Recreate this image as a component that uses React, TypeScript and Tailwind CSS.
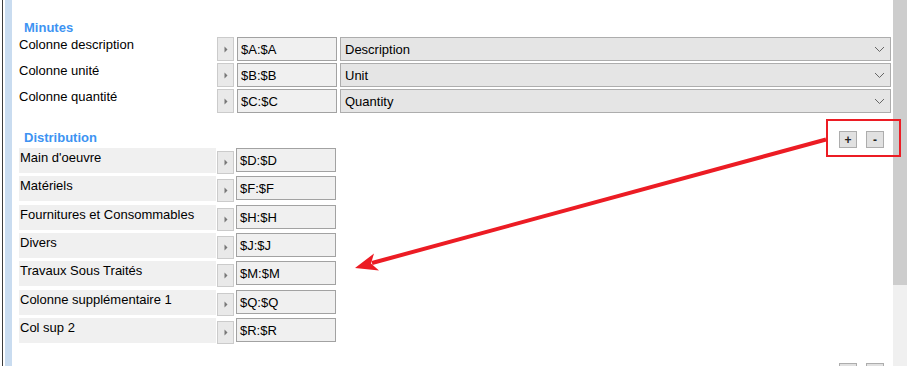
const minutes = [
  { label: "Colonne description", ref: "$A:$A", value: "Description" },
  { label: "Colonne unité", ref: "$B:$B", value: "Unit" },
  { label: "Colonne quantité", ref: "$C:$C", value: "Quantity" },
];

const distribution = [
  { label: "Main d'oeuvre", ref: "$D:$D" },
  { label: "Matériels", ref: "$F:$F" },
  { label: "Fournitures et Consommables", ref: "$H:$H" },
  { label: "Divers", ref: "$J:$J" },
  { label: "Travaux Sous Traités", ref: "$M:$M" },
  { label: "Colonne supplémentaire 1", ref: "$Q:$Q" },
  { label: "Col sup 2", ref: "$R:$R" },
];

function ArrowButton({ className = "" }: { className?: string }) {
  return (
    <div
      className={`flex h-[23px] w-[17px] shrink-0 items-center justify-center border border-[#cbcbcb] bg-[#e9e9e9] pl-[1px] ${className}`}
    >
      <svg width="4" height="7" viewBox="0 0 4 7" aria-hidden="true">
        <path d="M0.5 0.5 L3.5 3.5 L0.5 6.5Z" fill="#777" />
      </svg>
    </div>
  );
}

function RefBox({ value }: { value: string }) {
  return (
    <div className="h-[24px] w-[100px] shrink-0 border border-[#a2a2a2] bg-[#f0f0f0] pl-[3px] pt-[1px] text-[13px] leading-[22px] text-black">
      {value}
    </div>
  );
}

function SmallButton({ children }: { children?: string }) {
  return (
    <div className="flex h-[17px] w-[18px] items-center justify-center border border-[#adadad] bg-[#e1e1e1] text-[12px] font-bold leading-none text-[#222]">
      {children}
    </div>
  );
}

export default function App() {
  return (
    <div className="relative flex h-[366px] w-[907px] overflow-hidden bg-white font-['Liberation_Sans',Arial,sans-serif]">
      {/* left edge of the parent window */}
      <div className="flex w-[12px] shrink-0">
        <div className="w-[2px] bg-white" />
        <div className="w-[1px] bg-[#3c3c3c]" />
        <div className="w-[2px] bg-white" />
        <div className="w-[7px] bg-[#c9dcf0]" />
      </div>

      <div className="flex flex-1 flex-col pl-[7px] pt-[20px]">
        <div className="ml-[5px] text-[13px] font-bold leading-[15px] text-[#3d93f2]">Minutes</div>

        <div className="mt-[2px] flex flex-col gap-[2px]">
          {minutes.map((row) => (
            <div key={row.label} className="flex h-[24px] items-start">
              <div className="w-[198px] shrink-0 text-[13px] leading-[15px] text-black">{row.label}</div>
              <ArrowButton className="h-[24px]" />
              <div className="ml-[3px]">
                <RefBox value={row.ref} />
              </div>
              <div className="ml-[3px] mr-[2px] flex h-[24px] flex-1 items-center justify-between border border-[#adadad] bg-[#e5e5e5] pl-[4px] pr-[5px] pt-[1px] text-[13px] text-black">
                <span>{row.value}</span>
                <svg width="11" height="7" viewBox="0 0 11 7" aria-hidden="true">
                  <path d="M1 1 L5.5 5.5 L10 1" fill="none" stroke="#666" strokeWidth="1" />
                </svg>
              </div>
            </div>
          ))}
        </div>

        <div className="mt-[17px] flex h-[19px] items-start justify-between pr-[9px]">
          <div className="ml-[5px] text-[13px] font-bold leading-[15px] text-[#3d93f2]">Distribution</div>
          <div className="mt-[1px] flex gap-[9px]">
            <SmallButton>+</SmallButton>
            <SmallButton>-</SmallButton>
          </div>
        </div>

        <div className="grid grid-rows-[repeat(7,25px)] gap-y-[3.33px]">
          {distribution.map((row) => (
            <div key={row.label} className="flex h-[25px] items-start">
              <div className="h-[25px] w-[197px] shrink-0 bg-[#f0f0f0] pl-[1px] pt-[2px] text-[13px] leading-[15px] text-black">
                {row.label}
              </div>
              <ArrowButton className="ml-[1px] mt-[3px] h-[22px]" />
              <div className="ml-[2px]">
                <RefBox value={row.ref} />
              </div>
            </div>
          ))}
        </div>

        {/* next section's buttons, cut by the window edge */}
        <div className="mt-[20px] flex justify-end gap-[9px] pr-[9px]">
          <SmallButton />
          <SmallButton />
        </div>
      </div>

      {/* scrollbar */}
      <div className="flex w-[14px] shrink-0 flex-col bg-[#f0f0f0]">
        <div className="h-[285px] bg-[#cdcdcd]" />
      </div>

      {/* annotation overlay */}
      <svg
        className="pointer-events-none absolute left-0 top-0"
        width="907"
        height="366"
        viewBox="0 0 907 366"
        aria-hidden="true"
      >
        <rect x="827" y="120" width="73" height="36" fill="none" stroke="#ec1c24" strokeWidth="2" />
        <line x1="826" y1="139.5" x2="372" y2="263" stroke="#ec1c24" strokeWidth="4" />
        <path d="M355 268 L374 253.5 L371 263.5 L379 270.5 Z" fill="#ec1c24" />
      </svg>
    </div>
  );
}
